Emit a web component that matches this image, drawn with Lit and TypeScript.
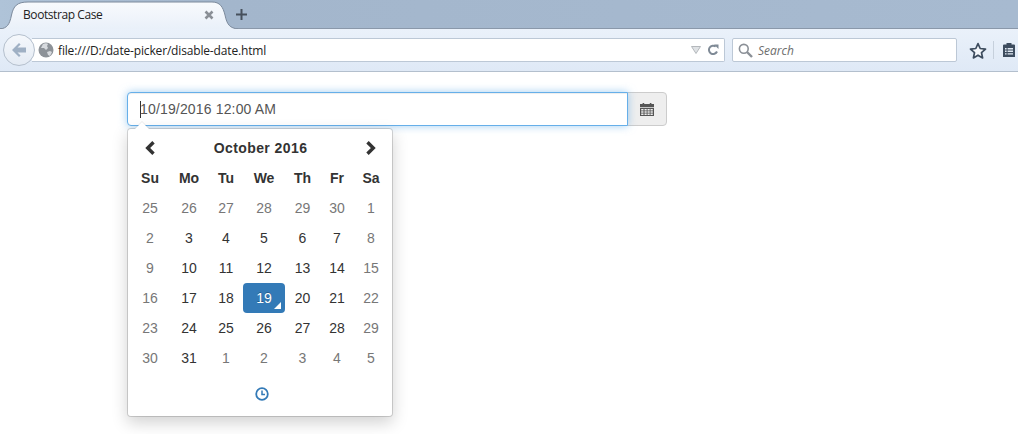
import { LitElement, html, css } from "lit";
import { customElement } from "lit/decorators.js";

type Day = { n: number; muted?: boolean; active?: boolean };
const m = (n: number): Day => ({ n, muted: true });
const d = (n: number): Day => ({ n });
const WEEKS: Day[][] = [
  [m(25), m(26), m(27), m(28), m(29), m(30), m(1)],
  [m(2), d(3), d(4), d(5), d(6), d(7), m(8)],
  [m(9), d(10), d(11), d(12), d(13), d(14), m(15)],
  [m(16), d(17), d(18), { n: 19, active: true }, d(20), d(21), m(22)],
  [m(23), d(24), d(25), d(26), d(27), d(28), m(29)],
  [m(30), d(31), m(1), m(2), m(3), m(4), m(5)],
];
const DOW = ["Su", "Mo", "Tu", "We", "Th", "Fr", "Sa"];

@customElement("app-root")
export class AppRoot extends LitElement {
  static styles = css`
    :host { display: block; width: 1018px; height: 434px; overflow: hidden; background: #fff; font-family: "Liberation Sans", Arial, sans-serif; color: #333; font-size: 14px; }
    * { box-sizing: border-box; }
    .tabstrip { height: 29px; display: flex; align-items: flex-end; background: linear-gradient(90deg, #afc3d8 0%, #a3b6cc 22%, #a7bad0 100%); border-bottom: 1px solid #8a98aa; position: relative; }
    .tab { width: 229px; height: 28px; margin-bottom: -1px; position: relative; display: flex; align-items: center; padding: 0 15px 1px 23px; font-family: "Open Sans", sans-serif; font-size: 12px; letter-spacing: -.42px; color: #222; flex: none; }
    .tab-bg { position: absolute; left: 0; top: 0; width: 238px; height: 29px; }
    .tab-title { position: relative; flex: 1; }
    .tab-x { position: relative; width: 10px; height: 10px; display: block; }
    .plus { width: 11px; height: 11px; margin: 0 0 8px 7px; display: block; flex: none; position: relative; }
    .toolbar { height: 43px; background: linear-gradient(#eaf1fa, #dfe9f6); border-bottom: 1px solid #b3bfcd; display: flex; align-items: center; padding: 0 0 0 3px; position: relative; }
    .back { width: 32px; height: 32px; border-radius: 50%; background: linear-gradient(#f5f8fc, #e4ebf4); border: 1px solid #b5c0cd; display: flex; align-items: center; justify-content: center; flex: none; position: relative; z-index: 1; }
    .url { margin-left: -3px; width: 693px; height: 24px; background: #fff; border: 1px solid #bcc8d6; border-left: none; border-radius: 0 2px 2px 0; display: flex; align-items: center; padding: 0 5px 0 6px; font-family: "Open Sans", sans-serif; font-size: 12px; letter-spacing: -.16px; color: #222; flex: none; }
    .url span { flex: 1; margin-left: 4px; white-space: nowrap; }
    .tri { margin-right: 6px; display: block; }
    .search { margin-left: 7px; width: 225px; height: 24px; background: #fff; border: 1px solid #bcc8d6; border-radius: 2px; display: flex; align-items: center; padding: 0 5px; font-family: "Open Sans", sans-serif; font-size: 12px; font-style: italic; color: #6d6d6d; flex: none; }
    .search span { margin-left: 5px; }
    .star { margin-left: 12px; display: block; flex: none; }
    .sep { width: 1px; height: 18px; background: #c6d0dc; margin-left: 6px; flex: none; }
    .clip { margin-left: 8px; display: block; flex: none; }
    .page { padding: 20px 0 0 127px; }
    .group { display: flex; width: 540px; position: relative; }
    .input { width: 501px; height: 34px; border: 1px solid #66afe9; border-radius: 4px 0 0 4px; box-shadow: inset 0 1px 1px rgba(0,0,0,.075), 0 0 8px rgba(102,175,233,.6); padding: 0 12px; display: flex; align-items: center; color: #555; letter-spacing: .16px; background: #fff; position: relative; z-index: 1; }
    .caret { width: 1px; height: 17px; background: #333; margin-right: -1px; }
    .addon { width: 40px; height: 34px; margin-left: -1px; border: 1px solid #ccc; border-radius: 0 4px 4px 0; background: #eee; display: flex; align-items: center; justify-content: center; padding-right: 1px; color: #555; }
    .popup { position: absolute; z-index: 2; left: 0; top: 36px; width: 266px; height: 289px; background: #fff; border-radius: 4px; border: 1px solid rgba(0,0,0,.15); background-clip: padding-box; box-shadow: 0 6px 16px rgba(0,0,0,.175); padding: 4px 3px 0 3px; }
    .arrow { position: absolute; left: 7px; top: -7px; width: 0; height: 0; border-left: 7px solid transparent; border-right: 7px solid transparent; border-bottom: 7px solid #fff; filter: drop-shadow(0 -1px 0 rgba(0,0,0,.08)); }
    .grid { display: grid; grid-template-columns: 38px 40px 34px 42px 35px 34px 34px; grid-auto-rows: 30px; width: 257px; }
    .cell { display: flex; align-items: center; justify-content: center; border-radius: 4px; position: relative; }
    .dow, .title { font-weight: bold; }
    .title { grid-column: 2 / span 5; letter-spacing: .42px; padding-right: 2px; }
    .muted { color: #777; }
    .active { background: #337ab7; color: #fff; text-shadow: 0 -1px 0 rgba(0,0,0,.25); }
    .active::before { content: ""; position: absolute; right: 4px; bottom: 4px; border-left: 7px solid transparent; border-bottom: 7px solid #fff; }
    .foot { display: flex; justify-content: center; margin-top: 6px; height: 30px; align-items: center; padding-left: 3px; }
    svg { display: block; }
  `;

  private renderCalIcon() {
    return html`<svg width="14" height="14" viewBox="0 0 14 14"><path fill="#555" d="M0 2h2.6V1h1.6v1h5.6V1h1.6v1H14v3H0zM0 5.8h14V14H0zM1.2 7v1.4h2.3V7zm3.3 0v1.4h2.2V7zm3 0v1.4h2.2V7zm3 0v1.4h2.3V7zM1.2 9.3v1.4h2.3V9.3zm3.3 0v1.4h2.2V9.3zm3 0v1.4h2.2V9.3zm3 0v1.4h2.3V9.3zM1.2 11.6V13h2.3v-1.4zm3.3 0V13h2.2v-1.4zm3 0V13h2.2v-1.4zm3 0V13h2.3v-1.4z" fill-rule="evenodd"/></svg>`;
  }

  render() {
    return html`
      <div class="tabstrip">
        <div class="tab">
          <svg class="tab-bg" viewBox="0 0 238 29"><defs><linearGradient id="tg" x1="0" y1="0" x2="0" y2="1"><stop offset="0" stop-color="#f8fafd"/><stop offset="1" stop-color="#e9f0f9"/></linearGradient></defs>
            <path d="M0 28C7 27 9.5 24 11.5 14 13.5 5 17 1 28 1H212C220 1 223 6 225 14 227 24 230 27 238 28V29H0Z" fill="url(#tg)" stroke="#7c8a9c" stroke-width="1"/><path d="M0 29H238" stroke="#eaf1fa" stroke-width="2"/></svg>
          <span class="tab-title">Bootstrap Case</span>
          <svg class="tab-x" viewBox="0 0 10 10"><path d="M1.5 1.5l7 7M8.5 1.5l-7 7" stroke="#8a8f96" stroke-width="2.6"/></svg>
        </div>
        <svg class="plus" viewBox="0 0 11 11"><path d="M5.5 0v11M0 5.5h11" stroke="#47505c" stroke-width="2"/></svg>
      </div>
      <div class="toolbar">
        <div class="back"><svg width="16" height="14" viewBox="0 0 16 14"><path d="M8 0L1 7l7 7 1.6-1.6L6.5 9.4H15V4.6H6.5L9.6 1.6z" fill="#9fb0c4"/></svg></div>
        <div class="url">
          <svg width="16" height="16" viewBox="0 0 16 16"><circle cx="8" cy="8" r="7.5" fill="#8d9298"/><path d="M5 2c2-1 4-1 5 0L9 4 10 6 8 8 6 6 3 6zM9 10l3-1 2 1-2 4-2-1z" fill="#d7dade"/></svg>
          <span>file:///D:/date-picker/disable-date.html</span>
          <svg class="tri" width="10" height="8" viewBox="0 0 10 8"><path d="M0.5 0.5h9L5 7.5z" fill="#dfe2e5" stroke="#b4b8bc"/></svg>
          <svg width="12" height="12" viewBox="0 0 12 12"><path d="M10 7.5A4.2 4.2 0 1 1 8.8 2.6" fill="none" stroke="#7f8a96" stroke-width="2"/><path d="M7 0.5h4.5V5z" fill="#7f8a96"/></svg>
        </div>
        <div class="search">
          <svg width="15" height="15" viewBox="0 0 15 15"><circle cx="5.8" cy="5.8" r="4.4" fill="none" stroke="#8b9097" stroke-width="1.6"/><path d="M9 9l5 5" stroke="#8b9097" stroke-width="2.4"/></svg>
          <span>Search</span>
        </div>
        <svg class="star" width="18" height="17" viewBox="0 0 18 17"><path d="M9 1.6l2.2 4.9 5.3.6-4 3.6 1.1 5.2L9 13.2l-4.6 2.7 1.1-5.2-4-3.6 5.3-.6z" fill="#f4f7fb" stroke="#3d4c5e" stroke-width="1.7" stroke-linejoin="round"/></svg>
        <div class="sep"></div>
        <svg class="clip" width="14" height="16" viewBox="0 0 14 16"><path d="M1 3.5Q1 2.5 2 2.5h2.5V1h5v1.5H12q1 0 1 1V15H1z" fill="#3d4c5e"/><path d="M3 6h1.6v1.4H3zM5.6 6H11v1.4H5.6zM3 8.6h1.6V10H3zM5.6 8.6H11V10H5.6zM3 11.2h1.6v1.4H3zM5.6 11.2H11v1.4H5.6z" fill="#dfe8f2"/></svg>
      </div>
      <div class="page">
        <div class="group">
          <div class="input"><span class="caret"></span>10/19/2016 12:00 AM</div>
          <div class="addon">${this.renderCalIcon()}</div>
          <div class="popup">
            <div class="arrow"></div>
            <div class="grid">
              <div class="cell"><svg width="12" height="14" viewBox="0 0 12 14"><path d="M9.5 1.2L3.7 7l5.8 5.8" fill="none" stroke="#333" stroke-width="3.4"/></svg></div>
              <div class="cell title">October 2016</div>
              <div class="cell"><svg width="12" height="14" viewBox="0 0 12 14"><path d="M2.5 1.2L8.3 7l-5.8 5.8" fill="none" stroke="#333" stroke-width="3.4"/></svg></div>
              ${DOW.map((x) => html`<div class="cell dow">${x}</div>`)}
              ${WEEKS.flat().map((c) => html`<div class="cell ${c.muted ? "muted" : ""} ${c.active ? "active" : ""}">${c.n}</div>`)}
            </div>
            <div class="foot"><svg width="14" height="14" viewBox="0 0 14 14"><circle cx="7" cy="7" r="5.8" fill="none" stroke="#337ab7" stroke-width="1.8"/><path d="M7 3.6V7.4H10" fill="none" stroke="#337ab7" stroke-width="1.5"/></svg></div>
          </div>
        </div>
      </div>
    `;
  }
}
